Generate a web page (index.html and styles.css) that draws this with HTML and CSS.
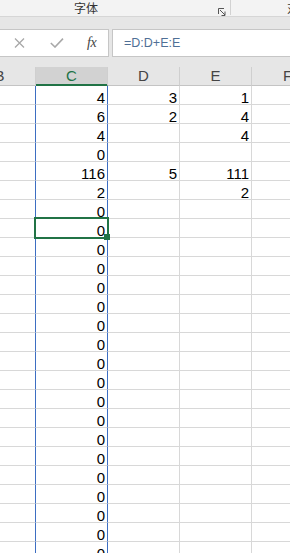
FILE: index.html
```html
<!DOCTYPE html>
<html>
<head>
  <title>Sheet</title>
  <link rel="stylesheet" href="styles.css">
</head>
<body>

<div class="ribbon">
  <div class="group">
    <span class="group-label">字体</span>
    <svg class="launcher" width="8" height="8" viewBox="0 0 8 8">
      <path d="M0.5 6V0.5H6" fill="none" stroke="#555" stroke-width="1"/>
      <path d="M2 2L7 7M7 3.5V7.5H3.5" fill="none" stroke="#555" stroke-width="1"/>
    </svg>
  </div>
  <span class="group-label next">对</span>
</div>

<div class="formula-row">
  <div class="name-tools">
    <svg class="tool-x" width="11" height="10" viewBox="0 0 11 10">
      <path d="M1 0.5L10 9.5M10 0.5L1 9.5" stroke="#a8a8a8" stroke-width="1.3" fill="none"/>
    </svg>
    <svg class="tool-ok" width="14" height="10" viewBox="0 0 14 10">
      <path d="M0.8 5L5 9L13 0.6" stroke="#a8a8a8" stroke-width="1.6" fill="none"/>
    </svg>
    <span class="tool-fx">fx</span>
  </div>
  <div class="formula">=D:D+E:E</div>
</div>

<div class="sheet">
  <div class="head">
    <div>B</div><div class="sel">C</div><div>D</div><div>E</div><div>F</div>
  </div>

  <div class="row"><div class="b"></div><div class="c">4</div><div>3</div><div>1</div><div></div></div>
  <div class="row"><div class="b"></div><div class="c">6</div><div>2</div><div>4</div><div></div></div>
  <div class="row"><div class="b"></div><div class="c">4</div><div></div><div>4</div><div></div></div>
  <div class="row"><div class="b"></div><div class="c">0</div><div></div><div></div><div></div></div>
  <div class="row"><div class="b"></div><div class="c">116</div><div>5</div><div>111</div><div></div></div>
  <div class="row"><div class="b"></div><div class="c">2</div><div></div><div>2</div><div></div></div>
  <div class="row"><div class="b"></div><div class="c">0</div><div></div><div></div><div></div></div>
  <div class="row"><div class="b"></div><div class="c">0</div><div></div><div></div><div></div></div>
  <div class="row"><div class="b"></div><div class="c">0</div><div></div><div></div><div></div></div>
  <div class="row"><div class="b"></div><div class="c">0</div><div></div><div></div><div></div></div>
  <div class="row"><div class="b"></div><div class="c">0</div><div></div><div></div><div></div></div>
  <div class="row"><div class="b"></div><div class="c">0</div><div></div><div></div><div></div></div>
  <div class="row"><div class="b"></div><div class="c">0</div><div></div><div></div><div></div></div>
  <div class="row"><div class="b"></div><div class="c">0</div><div></div><div></div><div></div></div>
  <div class="row"><div class="b"></div><div class="c">0</div><div></div><div></div><div></div></div>
  <div class="row"><div class="b"></div><div class="c">0</div><div></div><div></div><div></div></div>
  <div class="row"><div class="b"></div><div class="c">0</div><div></div><div></div><div></div></div>
  <div class="row"><div class="b"></div><div class="c">0</div><div></div><div></div><div></div></div>
  <div class="row"><div class="b"></div><div class="c">0</div><div></div><div></div><div></div></div>
  <div class="row"><div class="b"></div><div class="c">0</div><div></div><div></div><div></div></div>
  <div class="row"><div class="b"></div><div class="c">0</div><div></div><div></div><div></div></div>
  <div class="row"><div class="b"></div><div class="c">0</div><div></div><div></div><div></div></div>
  <div class="row"><div class="b"></div><div class="c">0</div><div></div><div></div><div></div></div>
  <div class="row"><div class="b"></div><div class="c">0</div><div></div><div></div><div></div></div>
  <div class="row"><div class="b"></div><div class="c">0</div><div></div><div></div><div></div></div>

  <!-- active cell C8 -->
  <div class="active-cell"></div>
  <div class="fill-handle"></div>
</div>

</body>
</html>
```

FILE: styles.css
```css
body {
  margin: 0;
  width: 290px;
  height: 553px;
  overflow: hidden;
  background: #e6e6e6;
  font-family: "Liberation Sans", Arial, sans-serif;
}

/* ribbon strip */
.ribbon {
  height: 16px;
  background: #f3f3f3;
  border-bottom: 1px solid #d6d6d6;
  display: flex;
  align-items: flex-start;
  font-family: "Noto Sans CJK SC", sans-serif;
  font-size: 12px;
  color: #333;
  overflow: hidden;
}

.group {
  width: 230px;
  flex-shrink: 0;
  height: 15px;
  border-right: 1px solid #d2d2d2;
  display: flex;
  align-items: center;
}

.group-label {
  line-height: 15px;
  margin-left: 74px;
  white-space: nowrap;
}

.group-label.next {
  margin-left: 56px;
}

.launcher {
  margin-left: auto;
  margin-right: 4px;
  margin-top: 8px;
}

/* formula bar */
.formula-row {
  display: flex;
  margin-top: 12px;
  height: 28px;
}

.name-tools {
  width: 110px;
  margin-left: -1px;
  box-sizing: border-box;
  background: #fff;
  border: 1px solid #c6c6c6;
  display: flex;
  align-items: center;
  padding-left: 14px;
}

.tool-ok {
  margin-left: 25px;
}

.tool-fx {
  margin-left: 23px;
  font-family: "Liberation Serif", serif;
  font-style: italic;
  font-size: 14px;
  color: #444;
  letter-spacing: -0.5px;
}

.formula {
  flex: 1;
  margin-left: 3px;
  background: #fff;
  border: 1px solid #c6c6c6;
  border-right: none;
  padding-left: 11px;
  font-size: 12.5px;
  line-height: 26px;
  color: #4f6f96;
}

/* grid */
.sheet {
  position: relative;
  margin-top: 10px;
}

.head, .row {
  display: grid;
  grid-template-columns: repeat(5, 72px);
  margin-left: -36px;
}

.head div {
  height: 18px;
  line-height: 18px;
  text-align: center;
  font-size: 15px;
  color: #444;
  border-right: 1px solid #cfcfcf;
  border-bottom: 1px solid #c4c4c4;
}

.head .sel {
  background: #d2d2d2;
  color: #217346;
  border-bottom-color: #217346;
  box-shadow: inset 0 -1px #217346;
}

.row div {
  height: 18px;
  background: #fff;
  border-right: 1px solid #d8d8d8;
  border-bottom: 1px solid #d8d8d8;
  text-align: right;
  font-size: 15px;
  line-height: 13px;
  color: #000;
  padding-right: 2px;
}

.row div:not(:empty) {
  height: 13px;
  padding-top: 5px;
}

.row .b,
.row .c {
  border-right-color: #3d6ec2;
}

.active-cell {
  position: absolute;
  left: 34px;
  top: 150px;
  width: 75px;
  height: 22px;
  box-sizing: border-box;
  border: 2px solid #217346;
}

.fill-handle {
  position: absolute;
  left: 104px;
  top: 167px;
  width: 6px;
  height: 6px;
  background: #217346;
}
```
